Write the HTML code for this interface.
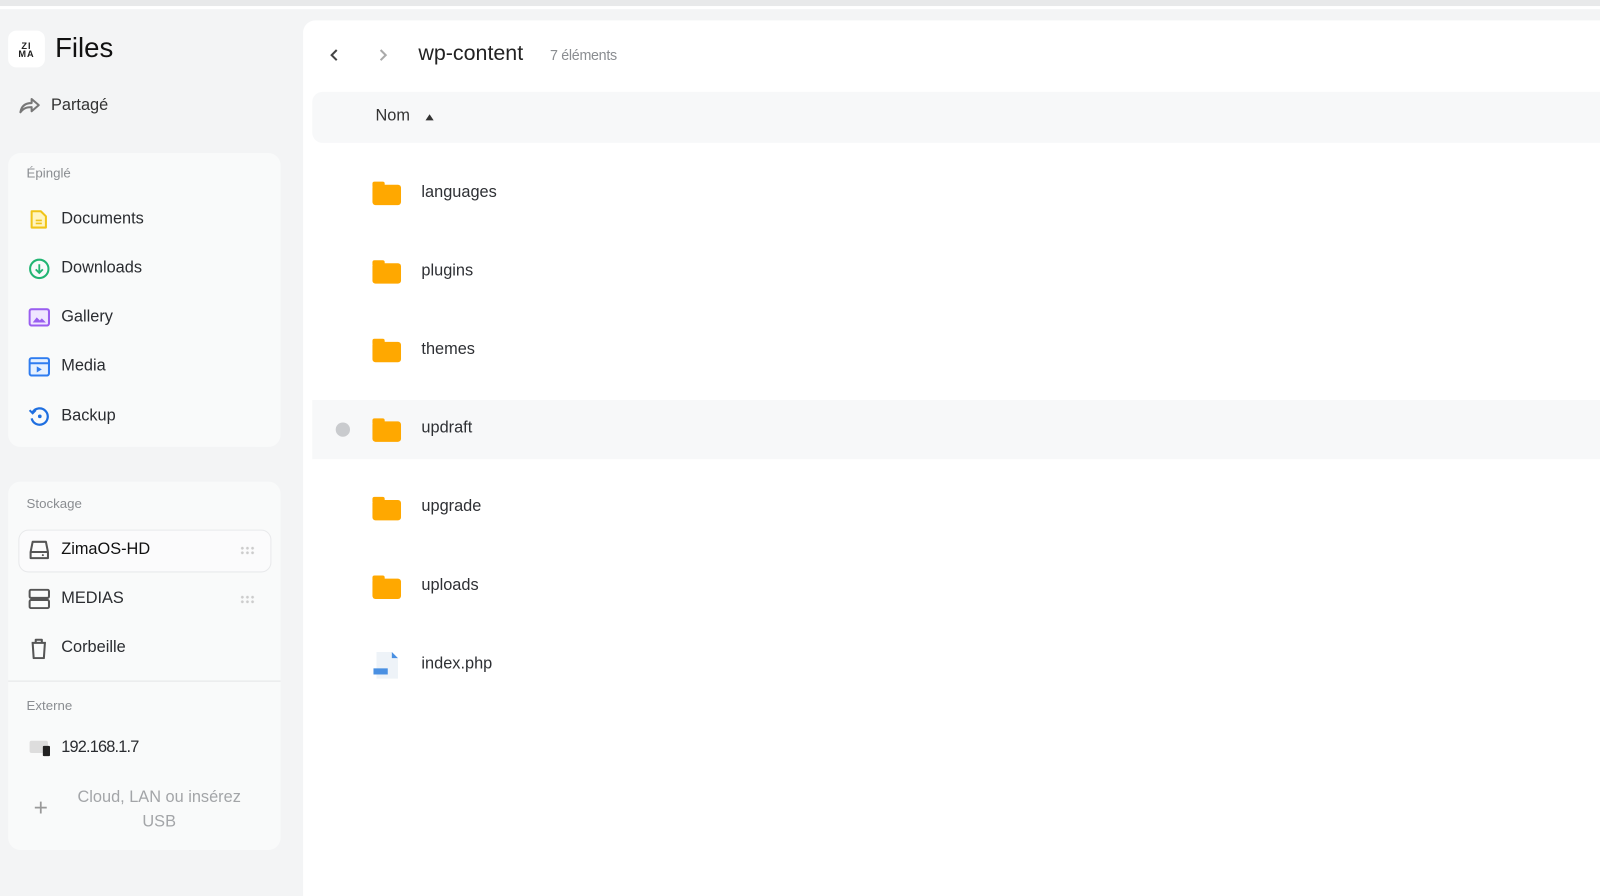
<!DOCTYPE html>
<html><head><meta charset="utf-8"><style>
*{margin:0;padding:0;box-sizing:border-box}
html,body{width:1600px;height:896px;overflow:hidden;background:#f3f4f5}
body{font-family:"Liberation Sans",sans-serif;color:#222;position:relative}
#w{position:absolute;left:0;top:0;width:1600px;height:896px;transform:scale(1.0204);transform-origin:0 0}
.topbar{position:absolute;left:0;top:0;width:1600px;height:6px;background:#e8e9ea}
.topline{position:absolute;left:0;top:6px;width:1600px;height:3px;background:#fff}
.abs{position:absolute}
.card{position:absolute;left:8px;width:267px;background:#f9fafa;border-radius:12px}
.lbl{position:absolute;left:26px;font-size:13px;color:#8a8d91}
.item{position:absolute;left:60px;font-size:16px;color:#2a2c30}
.ic{position:absolute;left:28px}
.main{position:absolute;left:297px;top:20px;width:1320px;height:880px;background:#fff;border-radius:12px 0 0 0}
.row{position:absolute;left:9px;width:1300px;height:58px}
.fold{position:absolute;left:59px;width:28px;height:20px;background:#ffa800;border-radius:3px}
.fold:before{content:"";position:absolute;left:0;top:-3px;width:12px;height:5px;background:#ffa800;border-radius:2px 2px 0 0}
.fn{position:absolute;left:107px;font-size:16px;color:#2e3034}
</style></head><body><div id="w">
<div class="topbar"></div><div class="topline"></div>

<div class="abs" style="left:8px;top:30px;width:36px;height:36px;background:#fff;border-radius:8px;font-size:9px;font-weight:bold;line-height:8px;text-align:center;padding-top:11px;letter-spacing:1px">ZI<br>MA</div>
<div class="abs" style="left:54px;top:32px;font-size:27px;color:#111">Files</div>
<svg class="abs" style="left:18px;top:95px" width="22" height="18" viewBox="0 0 22 18"><path d="M2 15 C3 9 7 6 13 6 V2 L20 8 L13 14 V10 C8 10 5 11 2 15Z" fill="none" stroke="#777" stroke-width="2" stroke-linejoin="round"/></svg>
<div class="abs" style="left:50px;top:95px;font-size:16px;color:#333">Partagé</div>

<div class="card" style="top:150px;height:288px"></div>
<div class="lbl" style="top:162px">Épinglé</div>
<svg class="ic" style="top:205px" width="20" height="20" viewBox="0 0 20 20"><path d="M3 2h9l5 5v11H3z" fill="#fff5c0" stroke="#f0c419" stroke-width="2" stroke-linejoin="round"/><path d="M7 11h6M7 14h6" stroke="#f0c419" stroke-width="1.6"/></svg>
<div class="item" style="top:206px">Documents</div>
<svg class="ic" style="top:253px" width="21" height="21" viewBox="0 0 21 21"><circle cx="10.5" cy="10.5" r="9" fill="none" stroke="#22b573" stroke-width="2"/><path d="M10.5 6v8M7 11l3.5 3.5L14 11" fill="none" stroke="#22b573" stroke-width="1.8"/></svg>
<div class="item" style="top:254px">Downloads</div>
<svg class="ic" style="top:302px" width="21" height="18" viewBox="0 0 21 18"><rect x="1" y="1" width="19" height="16" rx="2" fill="#f0e6ff" stroke="#9a5ef0" stroke-width="2"/><path d="M4 14l4-5 3 3 2-2 4 4z" fill="#9a5ef0"/></svg>
<div class="item" style="top:302px">Gallery</div>
<svg class="ic" style="top:350px" width="21" height="19" viewBox="0 0 21 19"><rect x="1" y="1" width="19" height="17" rx="2" fill="#e6f0ff" stroke="#2f7cf0" stroke-width="2"/><path d="M1 6h19" stroke="#2f7cf0" stroke-width="2"/><path d="M8 9v6l5-3z" fill="#2f7cf0"/></svg>
<div class="item" style="top:350px">Media</div>
<svg class="ic" style="top:398px" width="21" height="20" viewBox="0 0 21 20"><path d="M4 6A8 8 0 1 1 3 12" fill="none" stroke="#1f6fe0" stroke-width="2.2"/><path d="M1 4l3 3 3-3" fill="none" stroke="#1f6fe0" stroke-width="2"/><circle cx="11" cy="10" r="1.8" fill="#1f6fe0"/></svg>
<div class="item" style="top:399px">Backup</div>

<div class="card" style="top:472px;height:361px"></div>
<div class="lbl" style="top:486px">Stockage</div>
<div class="abs" style="left:18px;top:519px;width:248px;height:42px;background:#fbfbfc;border:1px solid #e8e9eb;border-radius:10px"></div>
<svg class="ic" style="top:529px" width="21" height="20" viewBox="0 0 21 20"><path d="M2 12L4 2h13l2 10v6H2z" fill="none" stroke="#555" stroke-width="2" stroke-linejoin="round"/><path d="M2 12h17" stroke="#555" stroke-width="2"/><circle cx="14" cy="15" r="1" fill="#555"/></svg>
<div class="item" style="top:530px;color:#111">ZimaOS-HD</div>
<div class="abs" style="left:235px;top:535px;width:15px;height:9px;background:radial-gradient(circle,#ccc 1.3px,transparent 1.5px) 0 0/5px 4.5px"></div>
<svg class="ic" style="top:577px" width="21" height="20" viewBox="0 0 21 20"><rect x="1" y="1" width="19" height="8" rx="1.5" fill="none" stroke="#555" stroke-width="2"/><rect x="1" y="11" width="19" height="8" rx="1.5" fill="none" stroke="#555" stroke-width="2"/></svg>
<div class="item" style="top:578px">MEDIAS</div>
<div class="abs" style="left:235px;top:583px;width:15px;height:9px;background:radial-gradient(circle,#ccc 1.3px,transparent 1.5px) 0 0/5px 4.5px"></div>
<svg class="ic" style="top:625px" width="20" height="21" viewBox="0 0 20 21"><path d="M3 5h14M7 5V2h6v3M4 5l1 15h10l1-15" fill="none" stroke="#555" stroke-width="2" stroke-linejoin="round"/></svg>
<div class="item" style="top:626px">Corbeille</div>
<div class="abs" style="left:8px;top:667px;width:267px;height:1px;background:#e4e5e7"></div>
<div class="lbl" style="top:684px">Externe</div>
<div class="abs" style="left:29px;top:726px;width:18px;height:12px;background:#ddd;border-radius:2px"></div>
<div class="abs" style="left:42px;top:731px;width:7px;height:10px;background:#222;border-radius:1px"></div>
<div class="item" style="top:724px;letter-spacing:-0.8px">192.168.1.7</div>
<div class="abs" style="left:33px;top:778px;font-size:24px;color:#999;font-weight:300">+</div>
<div class="abs" style="left:60px;top:770px;width:192px;text-align:center;font-size:16px;line-height:24px;color:#a3a5a8">Cloud, LAN ou insérez USB</div>

<div class="main">
  <svg class="abs" style="left:25px;top:27px" width="12" height="14" viewBox="0 0 12 14"><path d="M8 2L3 7l5 5" fill="none" stroke="#444" stroke-width="2"/></svg>
  <svg class="abs" style="left:72px;top:27px" width="12" height="14" viewBox="0 0 12 14"><path d="M4 2l5 5-5 5" fill="none" stroke="#aaa" stroke-width="2"/></svg>
  <div class="abs" style="left:113px;top:21px;font-size:21px;color:#222">wp-content</div>
  <div class="abs" style="left:242px;top:26px;font-size:14px;color:#8a8d91;letter-spacing:-0.3px">7 éléments</div>
  <div class="abs" style="left:9px;top:70px;width:1300px;height:50px;background:#f7f8f9;border-radius:10px 0 0 10px"></div>
  <div class="abs" style="left:71px;top:85px;font-size:16px;color:#333">Nom</div>
  <div class="abs" style="left:120px;top:92px;width:0;height:0;border-left:4.5px solid transparent;border-right:4.5px solid transparent;border-bottom:6px solid #333"></div>

  <div class="row" style="top:140px"><div class="fold" style="top:21px"></div><div class="fn" style="top:20px">languages</div></div>
  <div class="row" style="top:217px"><div class="fold" style="top:21px"></div><div class="fn" style="top:20px">plugins</div></div>
  <div class="row" style="top:294px"><div class="fold" style="top:21px"></div><div class="fn" style="top:20px">themes</div></div>
  <div class="row" style="top:372px;background:#f7f8f9"><div class="abs" style="left:23px;top:22px;width:14px;height:14px;border-radius:50%;background:#c9cbce"></div><div class="fold" style="top:21px"></div><div class="fn" style="top:19px">updraft</div></div>
  <div class="row" style="top:449px"><div class="fold" style="top:21px"></div><div class="fn" style="top:19px">upgrade</div></div>
  <div class="row" style="top:526px"><div class="fold" style="top:21px"></div><div class="fn" style="top:19px">uploads</div></div>
  <div class="row" style="top:603px">
    <svg class="abs" style="left:59px;top:15px" width="28" height="28" viewBox="0 0 28 28"><path d="M4 1h15l6 6v20H4z" fill="#eef3f8"/><path d="M19 1l6 6h-6z" fill="#4a90e2"/><rect x="1" y="17" width="14" height="6" fill="#4a90e2"/></svg>
    <div class="fn" style="top:19px">index.php</div>
  </div>
</div>
</div></body></html>
